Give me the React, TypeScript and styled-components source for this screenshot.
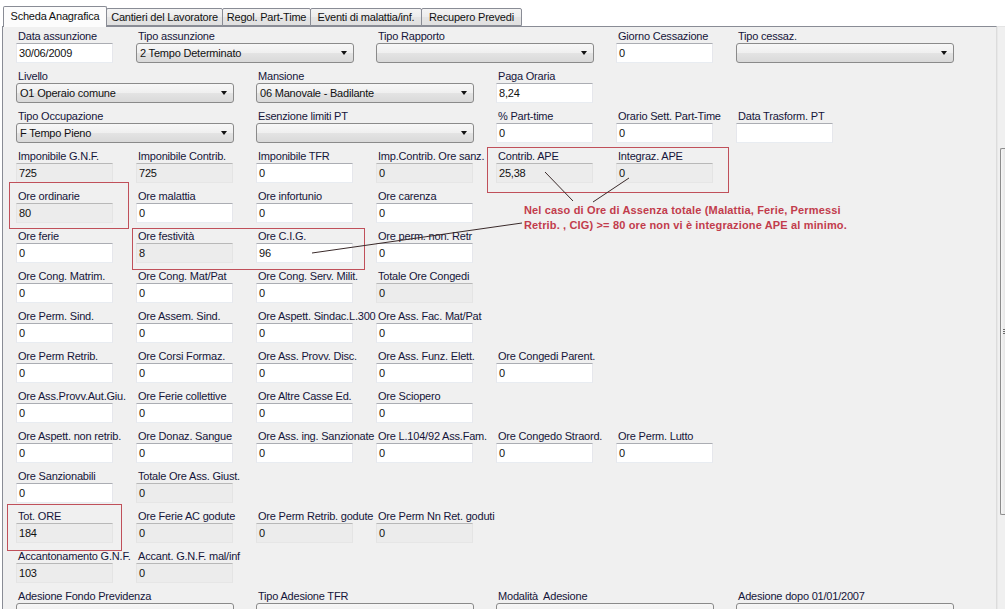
import React from "react";
import styled, { createGlobalStyle } from "styled-components";

const GlobalStyle = createGlobalStyle`
  html, body { margin: 0; padding: 0; background: #ffffff; }
  body {
    width: 1005px; height: 609px; overflow: hidden;
    font-family: "Liberation Sans", Arial, sans-serif;
    font-size: 11px; color: #14142a;
    letter-spacing: -0.2px;
  }
  * { box-sizing: border-box; }
`;

const Page = styled.div`
  position: relative;
  width: 1005px;
  height: 609px;
  padding-left: 2px;
  display: flex;
  flex-direction: column;
  overflow: hidden;
`;

const TabStrip = styled.div`
  position: relative;
  z-index: 2;
  height: 26px;
  display: flex;
  align-items: flex-end;
  padding-left: 1px;
`;

const Tab = styled.div<{ $active?: boolean; $w: number }>`
  width: ${(p) => p.$w}px;
  height: ${(p) => (p.$active ? 21 : 18)}px;
  margin-left: ${(p) => (p.$active ? 0 : -1)}px;
  margin-bottom: ${(p) => (p.$active ? -1 : 0)}px;
  border: 1px solid #898c95;
  border-bottom: ${(p) => (p.$active ? "none" : "1px solid #898c95")};
  border-radius: 2px 2px 0 0;
  background: ${(p) =>
    p.$active ? "#fcfcfc" : "linear-gradient(#f4f4f4, #ececec 50%, #e4e4e4 51%, #e0e0e0)"};
  display: flex;
  align-items: ${(p) => (p.$active ? "flex-start" : "center")};
  padding-top: ${(p) => (p.$active ? 3 : 0)}px;
  justify-content: center;
  white-space: nowrap;
  color: #111;
  position: relative;
  z-index: ${(p) => (p.$active ? 2 : 1)};
`;

const Body = styled.div`
  flex: 1;
  display: flex;
  min-height: 0;
`;

const Panel = styled.div`
  width: 995px;
  border-top: 1px solid #898c95;
  border-left: 1px solid #898c95;
  border-right: 1px solid #dcdcdc;
  background: #f0f0f0;
  padding: 2px 0 0 13px;
  display: flex;
  flex-direction: column;
`;

const ScrollCol = styled.div`
  flex: 1;
  background: #f0f0f0;
  border-top: 1px solid #e4e4e4;
  border-left: 1px solid #e8e8e8;
  padding: 121px 0 0 2px;
`;

const Thumb = styled.div`
  position: relative;
  height: 367px;
  border: 1px solid #8c8c8c;
  border-right: none;
  border-radius: 2px 0 0 2px;
  background: linear-gradient(90deg, #f7f7f7, #e6e6e6);
  &::after {
    content: "";
    position: absolute;
    left: 2px;
    top: 180px;
    width: 4px;
    height: 5px;
    background: repeating-linear-gradient(#6d6d6d 0 1px, transparent 1px 2px);
  }
`;

const Row = styled.div`
  height: 40px;
  flex: none;
  display: grid;
  grid-template-columns: repeat(8, 120px);
`;

const Field = styled.div<{ $col: number; $span: number }>`
  grid-column: ${(p) => p.$col} / span ${(p) => p.$span};
  display: flex;
  flex-direction: column;
  min-width: 0;
`;

const Label = styled.div`
  height: 14px;
  line-height: 14px;
  padding-left: 2px;
  white-space: pre;
  color: #15153a;
`;

const TextBox = styled.div<{ $ro?: boolean }>`
  width: 97px;
  height: 20px;
  line-height: 18px;
  padding-left: 2px;
  background: ${(p) => (p.$ro ? "#ececec" : "#ffffff")};
  border-top: 1px solid ${(p) => (p.$ro ? "#b8b8b8" : "#abadb3")};
  border-left: 1px solid ${(p) => (p.$ro ? "#e4e4e4" : "#e6e7ec")};
  border-right: 1px solid ${(p) => (p.$ro ? "#e4e4e4" : "#e6e7ec")};
  border-bottom: 1px solid ${(p) => (p.$ro ? "#e6e6e6" : "#e8ecf1")};
  color: #111;
  white-space: nowrap;
`;

const Combo = styled.div`
  position: relative;
  width: 218px;
  height: 20px;
  line-height: 18px;
  padding-left: 3px;
  border: 1px solid #8a8a8a;
  border-radius: 3px;
  background: linear-gradient(#f7f7f7, #efefef 50%, #e3e3e3 52%, #d9d9d9);
  color: #111;
  white-space: nowrap;
  &::after {
    content: "";
    position: absolute;
    right: 6px;
    top: 7px;
    border-left: 3.5px solid transparent;
    border-right: 3.5px solid transparent;
    border-top: 4px solid #111;
  }
`;

const Overlay = styled.svg`
  position: absolute;
  left: 0;
  top: 0;
  width: 1005px;
  height: 609px;
  pointer-events: none;
  z-index: 5;
`;

const RedBox = styled.div<{ $x: number; $y: number; $w: number; $h: number }>`
  position: absolute;
  left: ${(p) => p.$x}px;
  top: ${(p) => p.$y}px;
  width: ${(p) => p.$w}px;
  height: ${(p) => p.$h}px;
  border: 1px solid #c0505a;
  pointer-events: none;
  z-index: 4;
`;

const Note = styled.div`
  position: absolute;
  left: 524px;
  top: 203px;
  z-index: 6;
  font-family: "Liberation Sans", Arial, sans-serif;
  font-weight: bold;
  font-size: 11px;
  letter-spacing: 0.15px;
  line-height: 15px;
  color: #c23c4c;
  white-space: nowrap;
`;

type Kind = "text" | "ro" | "combo";
type Cell = [number, string, Kind, string?];

const rows: Cell[][] = [
  [
    [1, "Data assunzione", "text", "30/06/2009"],
    [2, "Tipo assunzione", "combo", "2 Tempo Determinato"],
    [4, "Tipo Rapporto", "combo", ""],
    [6, "Giorno Cessazione", "text", "0"],
    [7, "Tipo cessaz.", "combo", ""],
  ],
  [
    [1, "Livello", "combo", "O1 Operaio comune"],
    [3, "Mansione", "combo", "06 Manovale - Badilante"],
    [5, "Paga Oraria", "text", "8,24"],
  ],
  [
    [1, "Tipo Occupazione", "combo", "F Tempo Pieno"],
    [3, "Esenzione limiti PT", "combo", ""],
    [5, "% Part-time", "text", "0"],
    [6, "Orario Sett. Part-Time", "text", "0"],
    [7, "Data Trasform. PT", "text", ""],
  ],
  [
    [1, "Imponibile G.N.F.", "ro", "725"],
    [2, "Imponibile Contrib.", "ro", "725"],
    [3, "Imponibile TFR", "text", "0"],
    [4, "Imp.Contrib. Ore sanz.", "ro", "0"],
    [5, "Contrib. APE", "ro", "25,38"],
    [6, "Integraz. APE", "ro", "0"],
  ],
  [
    [1, "Ore ordinarie", "ro", "80"],
    [2, "Ore malattia", "text", "0"],
    [3, "Ore infortunio", "text", "0"],
    [4, "Ore carenza", "text", "0"],
  ],
  [
    [1, "Ore ferie", "text", "0"],
    [2, "Ore festività", "ro", "8"],
    [3, "Ore C.I.G.", "text", "96"],
    [4, "Ore perm. non. Retr", "text", "0"],
  ],
  [
    [1, "Ore Cong. Matrim.", "text", "0"],
    [2, "Ore Cong. Mat/Pat", "text", "0"],
    [3, "Ore Cong. Serv. Milit.", "text", "0"],
    [4, "Totale Ore Congedi", "ro", "0"],
  ],
  [
    [1, "Ore Perm. Sind.", "text", "0"],
    [2, "Ore Assem. Sind.", "text", "0"],
    [3, "Ore Aspett. Sindac.L.300", "text", "0"],
    [4, "Ore Ass. Fac. Mat/Pat", "text", "0"],
  ],
  [
    [1, "Ore Perm Retrib.", "text", "0"],
    [2, "Ore Corsi Formaz.", "text", "0"],
    [3, "Ore Ass. Provv. Disc.", "text", "0"],
    [4, "Ore Ass. Funz. Elett.", "text", "0"],
    [5, "Ore Congedi Parent.", "text", "0"],
  ],
  [
    [1, "Ore Ass.Provv.Aut.Giu.", "text", "0"],
    [2, "Ore Ferie collettive", "text", "0"],
    [3, "Ore Altre Casse Ed.", "text", "0"],
    [4, "Ore Sciopero", "text", "0"],
  ],
  [
    [1, "Ore Aspett. non retrib.", "text", "0"],
    [2, "Ore Donaz. Sangue", "text", "0"],
    [3, "Ore Ass. ing. Sanzionate", "text", "0"],
    [4, "Ore L.104/92 Ass.Fam.", "text", "0"],
    [5, "Ore Congedo Straord.", "text", "0"],
    [6, "Ore Perm. Lutto", "text", "0"],
  ],
  [
    [1, "Ore Sanzionabili", "text", "0"],
    [2, "Totale Ore Ass. Giust.", "ro", "0"],
  ],
  [
    [1, "Tot. ORE", "ro", "184"],
    [2, "Ore Ferie AC godute", "ro", "0"],
    [3, "Ore Perm Retrib. godute", "ro", "0"],
    [4, "Ore Perm Nn Ret. goduti", "ro", "0"],
  ],
  [
    [1, "Accantonamento G.N.F.", "ro", "103"],
    [2, "Accant. G.N.F. mal/inf", "ro", "0"],
  ],
  [
    [1, "Adesione Fondo Previdenza", "combo", ""],
    [3, "Tipo Adesione TFR", "combo", ""],
    [5, "Modalità  Adesione", "combo", ""],
    [7, "Adesione dopo 01/01/2007", "combo", ""],
  ],
];

const tabs: [string, number][] = [
  ["Scheda Anagrafica", 104],
  ["Cantieri del Lavoratore", 117],
  ["Regol. Part-Time", 89],
  ["Eventi di malattia/inf.", 112],
  ["Recupero Prevedi", 101],
];

export default function App() {
  return (
    <>
      <GlobalStyle />
      <Page>
        <TabStrip>
          {tabs.map(([t, w], i) => (
            <Tab key={t} $w={w} $active={i === 0}>
              {t}
            </Tab>
          ))}
        </TabStrip>
        <Body>
          <Panel>
            {rows.map((r, ri) => (
              <Row key={ri}>
                {r.map(([col, label, kind, value]) => (
                  <Field key={label} $col={col} $span={kind === "combo" ? 2 : 1}>
                    <Label>{label}</Label>
                    {kind === "combo" ? (
                      <Combo>{value}</Combo>
                    ) : (
                      <TextBox $ro={kind === "ro"}>{value}</TextBox>
                    )}
                  </Field>
                ))}
              </Row>
            ))}
          </Panel>
          <ScrollCol>
            <Thumb />
          </ScrollCol>
        </Body>

        <RedBox $x={487} $y={147} $w={242} $h={46} />
        <RedBox $x={9} $y={182} $w={120} $h={47} />
        <RedBox $x={132} $y={228} $w={233} $h={42} />
        <RedBox $x={7} $y={504} $w={115} $h={47} />

        <Overlay viewBox="0 0 1005 609">
          <line x1="522" y1="223" x2="312" y2="253" stroke="#3a2a2a" strokeWidth="1" />
          <line x1="545" y1="172" x2="573" y2="201" stroke="#3a2a2a" strokeWidth="1" />
          <line x1="629" y1="178" x2="593" y2="202" stroke="#3a2a2a" strokeWidth="1" />
        </Overlay>

        <Note>
          Nel caso di Ore di Assenza totale (Malattia, Ferie, Permessi
          <br />
          Retrib. , CIG) &gt;= 80 ore non vi è integrazione APE al minimo.
        </Note>
      </Page>
    </>
  );
}
